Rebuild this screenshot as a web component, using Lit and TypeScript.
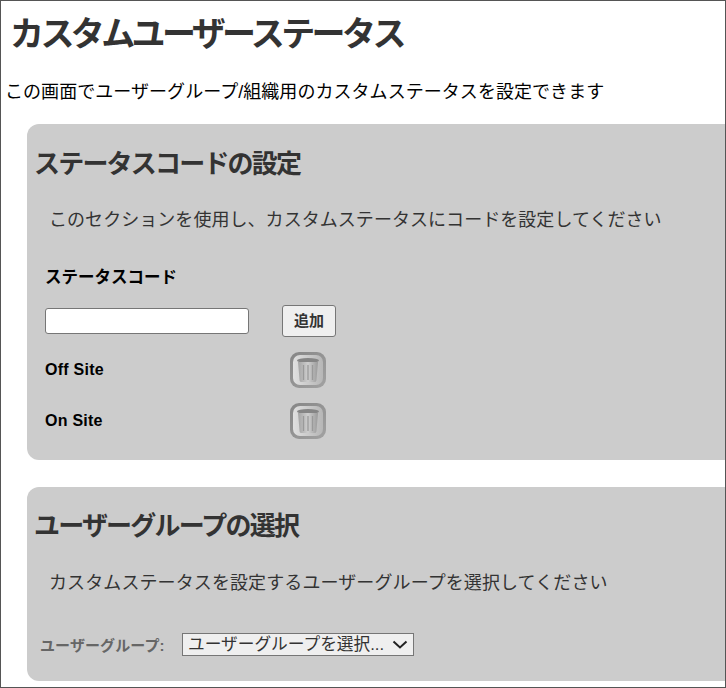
import { LitElement, html, css } from 'lit';
import { customElement } from 'lit/decorators.js';

const FONT = css`"Liberation Sans", Arial, "Noto Sans CJK JP", sans-serif`;

@customElement('app-root')
export class AppRoot extends LitElement {
  static styles = css`
    :host {
      display: block;
      box-sizing: border-box;
      width: 726px;
      height: 688px;
      border: 1px solid #555;
      overflow: hidden;
      background: #fff;
      font-family: ${FONT};
      color: #000;
    }
    h1 {
      margin: 0;
      padding: 14px 0 0 9px;
      font-size: 34px;
      line-height: 38px;
      font-weight: 700;
      color: #333;
      letter-spacing: -3.6px;
    }
    .intro {
      margin: 0;
      padding: 26px 0 0 4px;
      font-size: 18px;
      line-height: 26px;
      letter-spacing: 0.05px;
      white-space: nowrap;
    }
    .panel {
      margin-left: 26px;
      background: #ccc;
      border-radius: 12px 0 0 12px;
      box-sizing: border-box;
    }
    .codes {
      margin-top: 19px;
      height: 336px;
      padding: 25px 0 0 7px;
    }
    .groups {
      margin-top: 27px;
      height: 194px;
      padding: 24px 0 0 7px;
    }
    h2 {
      margin: 0;
      font-size: 26px;
      line-height: 30px;
      font-weight: 700;
      color: #333;
      letter-spacing: -1.8px;
    }
    .desc {
      margin: 0;
      font-size: 18px;
      line-height: 26px;
      letter-spacing: 0.05px;
      color: #333;
      white-space: nowrap;
    }
    .codes .desc { padding: 28px 0 0 15px; }
    .groups .desc { padding: 29px 0 0 15px; letter-spacing: 0.1px; }
    .code-label {
      margin: 0;
      padding: 34px 0 0 11px;
      font-size: 16.5px;
      line-height: 20px;
      font-weight: 700;
    }
    .add-row {
      display: flex;
      align-items: center;
      gap: 33px;
      padding: 18px 0 0 11px;
    }
    .add-row input {
      box-sizing: border-box;
      width: 204px;
      height: 26px;
      margin: 0;
      padding: 1px 2px;
      border: 1px solid #767676;
      border-radius: 3px;
      background: #fff;
    }
    .add-row button {
      box-sizing: border-box;
      width: 54px;
      height: 32px;
      padding: 0 0 3px;
      border: 1px solid #767676;
      border-radius: 3px;
      background: #efefef;
      color: #333;
      font-family: inherit;
      font-size: 15px;
      font-weight: 700;
    }
    .status {
      display: flex;
      align-items: center;
      height: 38px;
      margin-left: 11px;
      width: 282px;
      justify-content: space-between;
      font-size: 16px;
      font-weight: 700;
      letter-spacing: 0.25px;
    }
    .list { padding-top: 14px; display: flex; flex-direction: column; gap: 13px; }
    .trash { display: block; width: 38px; height: 38px; margin-right: 0; }
    .picker {
      display: flex;
      align-items: center;
      gap: 17px;
      padding: 37px 0 0 6px;
    }
    .picker label {
      width: 125px;
      font-size: 15px;
      font-weight: 700;
      letter-spacing: 0.1px;
      color: #666;
      white-space: nowrap;
    }
    .picker select {
      appearance: none;
      box-sizing: border-box;
      width: 232px;
      height: 23px;
      margin: 0;
      padding: 0 0 0 5px;
      border: 1px solid #767676;
      border-radius: 0;
      background: #efefef url("data:image/svg+xml,%3Csvg xmlns='http://www.w3.org/2000/svg' width='16' height='9'%3E%3Cpath d='M1.500 1.500 8 7.500l6.500-6' fill='none' stroke='%23222' stroke-width='2'/%3E%3C/svg%3E") no-repeat right 5px center;
      color: #333;
      font-family: inherit;
      font-size: 16.7px;
    }
  `;

  private statuses = ['Off Site', 'On Site'];

  private renderTrash() {
    return html`<svg class="trash" viewBox="0 0 38 38">
      <defs>
        <linearGradient id="frame" x1="0" y1="0" x2="1" y2="1">
          <stop offset="0" stop-color="#868686"></stop>
          <stop offset="1" stop-color="#a2a2a2"></stop>
        </linearGradient>
        <linearGradient id="face" x1="0" y1="0" x2="1" y2="0">
          <stop offset="0" stop-color="#e0e0e0"></stop>
          <stop offset="1" stop-color="#b6b6b6"></stop>
        </linearGradient>
        <linearGradient id="can" x1="0" y1="0" x2="1" y2="0">
          <stop offset="0" stop-color="#a4a4a4"></stop>
          <stop offset="0.5" stop-color="#cecece"></stop>
          <stop offset="1" stop-color="#9a9a9a"></stop>
        </linearGradient>
        <filter id="soft"><feGaussianBlur stdDeviation="0.5"></feGaussianBlur></filter>
      </defs>
      <g filter="url(#soft)">
        <rect x="1" y="1" width="36" height="36" rx="9" fill="url(#frame)"></rect>
        <rect x="4" y="4" width="30" height="30" rx="7" fill="url(#face)"></rect>
        <ellipse cx="19" cy="9.500" rx="11" ry="2.400" fill="#858585"></ellipse>
        <path d="M9 11h20l-1.600 18.500a2 2 0 0 1-2 1.600H12.600a2 2 0 0 1-2-1.600z" fill="url(#can)"></path>
        <path d="M14.500 14v15M19 14v15M23.500 14v15" stroke="#9a9a9a" stroke-width="1.300" fill="none"></path>
      </g>
    </svg>`;
  }

  render() {
    return html`
      <h1>カスタムユーザーステータス</h1>
      <p class="intro">この画面でユーザーグループ/組織用のカスタムステータスを設定できます</p>
      <section class="panel codes">
        <h2>ステータスコードの設定</h2>
        <p class="desc">このセクションを使用し、カスタムステータスにコードを設定してください</p>
        <p class="code-label">ステータスコード</p>
        <div class="add-row">
          <input type="text" />
          <button>追加</button>
        </div>
        <div class="list">
          ${this.statuses.map(s => html`<div class="status"><span>${s}</span>${this.renderTrash()}</div>`)}
        </div>
      </section>
      <section class="panel groups">
        <h2>ユーザーグループの選択</h2>
        <p class="desc">カスタムステータスを設定するユーザーグループを選択してください</p>
        <div class="picker">
          <label>ユーザーグループ:</label>
          <select><option>ユーザーグループを選択...</option></select>
        </div>
      </section>
    `;
  }
}
